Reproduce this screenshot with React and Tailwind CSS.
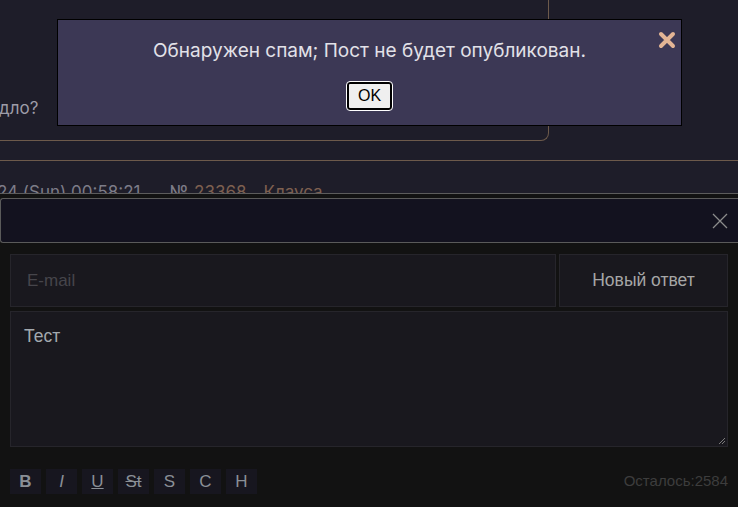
export default function App() {
  const tools = [
    { label: "B", cls: "font-bold" },
    { label: "I", cls: "italic" },
    { label: "U", cls: "underline" },
    { label: "St", cls: "line-through" },
    { label: "S", cls: "" },
    { label: "C", cls: "" },
    { label: "H", cls: "" },
  ];

  return (
    <div className="relative w-[738px] h-[507px] overflow-hidden bg-[#1e1d29] font-['Inter',sans-serif]">
      {/* thread behind the form */}
      <div className="h-[193px] overflow-hidden">
        <div className="w-[549px] h-[141px] border-r border-b border-[#6d5a4b] rounded-br-lg pt-[94px]">
          <p className="text-[17px] leading-[28px] text-[#9d9ca8] -ml-px">дло?</p>
        </div>
        <div className="mt-[19px] h-px bg-[#6d5a4b]" />
        <div className="mt-[20px] flex items-baseline text-[17px] leading-[22px] text-[#7d7c88] -ml-[3px] whitespace-nowrap">
          <span>24 (Sun) 00:58:21</span>
          <span className="ml-[29px]">№</span>
          <span className="ml-[6px] text-[#7e6050]">23368</span>
          <span className="ml-[17px] text-[#7e6050]">Клауса</span>
        </div>
      </div>

      {/* reply form */}
      <div className="border-t border-[#5c5c5c] bg-[#121212] pt-[4px] h-[314px] font-['Liberation_Sans',Arial,sans-serif]">
        <div className="h-[45px] border border-r-0 border-[#5a5a5a] rounded-l-[3px] bg-[#13121f] flex items-center justify-end pr-[10px]">
          <svg width="16" height="16" viewBox="0 0 16 16" fill="none" stroke="#8c8c8c" strokeWidth="1.3">
            <path d="M1 1 15 15M15 1 1 15" />
          </svg>
        </div>
        <div className="px-[10px] pt-[11px]">
          <div className="flex gap-[3px] h-[53px]">
            <div className="flex-1 border border-[#26252b] bg-[#19181e] flex items-center px-[16px] text-[17px] text-[#46454b]">
              E-mail
            </div>
            <div className="w-[169px] border border-[#26252b] bg-[#19181e] flex items-center justify-center text-[17.5px] text-[#a6a6a6]">
              Новый ответ
            </div>
          </div>
          <div className="relative mt-[4px] h-[136px] border border-[#26252b] bg-[#19181e] px-[13px] pt-[13px] text-[17.5px] leading-[22px] text-[#a3a9af]">
            Тест
            <svg className="absolute right-[1px] bottom-[1px]" width="8" height="8" viewBox="0 0 8 8" stroke="#7a7a7a" strokeWidth="1">
              <path d="M7 1 1 7M7 4 4 7" />
            </svg>
          </div>
          <div className="mt-[22px] flex items-center justify-between">
            <div className="flex gap-[5px]">
              {tools.map((t) => (
                <div
                  key={t.label}
                  className={`w-[31px] h-[25px] bg-[#17161f] flex items-center justify-center text-[17px] text-[#8a8f96] ${t.cls}`}
                >
                  {t.label}
                </div>
              ))}
            </div>
            <span className="text-[15px] text-[#3d3d3d]">Осталось:2584</span>
          </div>
        </div>
      </div>

      {/* alert popup */}
      <div className="absolute left-[57px] top-[19px] w-[625px] h-[107px] bg-[#3c3855] border border-black flex flex-col items-center">
        <p className="mt-[17px] text-[19px] leading-[28px] text-[#e2e1e8]">
          Обнаружен спам; Пост не будет опубликован.
        </p>
        <button className="mt-[17px] w-[45px] h-[28px] rounded-[3px] bg-[#efefef] border-2 border-black outline outline-1 outline-white text-[16px] text-black font-['Liberation_Sans',Arial,sans-serif]">
          OK
        </button>
        <svg className="absolute right-[4px] top-[11px]" width="20" height="18" viewBox="0 0 20 18" stroke="#e3b595" strokeWidth="4" strokeLinecap="round">
          <path d="M4 3 16 15M16 3 4 15" />
        </svg>
      </div>
    </div>
  );
}
